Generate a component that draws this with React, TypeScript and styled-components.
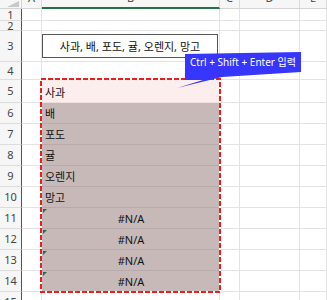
import React from "react";
import styled, { createGlobalStyle } from "styled-components";

const GlobalStyle = createGlobalStyle`
  html, body {
    margin: 0;
    padding: 0;
    background: #ffffff;
    overflow: hidden;
  }
  * {
    box-sizing: border-box;
  }
`;

const Page = styled.div`
  position: relative;
  width: 327px;
  height: 300px;
  overflow: hidden;
  font-family: "Noto Sans", "Noto Sans CJK KR", sans-serif;
`;

const Sheet = styled.div`
  display: grid;
  grid-template-columns: 22px 20px 178px 20px 60px 27px;
  grid-template-rows: 9px 12px 10px 31px 18px 23px repeat(9, 21px) 21px;
`;

type Place = { $r: number; $c: number };

const placed = (p: Place) => `grid-row: ${p.$r}; grid-column: ${p.$c};`;

const Corner = styled.div`
  grid-row: 1;
  grid-column: 1;
  background: #f6f6f6;
  border-right: 1px solid #d4d4d4;
  border-bottom: 1px solid #d4d4d4;
  position: relative;
  overflow: hidden;
  &::after {
    content: "";
    position: absolute;
    right: 2px;
    bottom: 1px;
    border-left: 12px solid transparent;
    border-bottom: 6px solid #c8c8c8;
  }
`;

const ColHeader = styled.div<{ $c: number; $active?: boolean }>`
  grid-row: 1;
  grid-column: ${(p) => p.$c};
  background: #f6f6f6;
  border-right: 1px solid #dadada;
  border-bottom: ${(p) => (p.$active ? "2px solid #217346" : "1px solid #d4d4d4")};
  color: #444;
  font-size: 11px;
  line-height: 12px;
  text-align: center;
  overflow: hidden;
  span {
    display: block;
    margin-top: -8px;
  }
`;

const RowHeader = styled.div<{ $r: number }>`
  grid-row: ${(p) => p.$r};
  grid-column: 1;
  background: #f6f6f6;
  border-right: 1px solid #217346;
  border-bottom: 1px solid #dcdcdc;
  color: #444;
  font-size: 11px;
  line-height: 12px;
  display: flex;
  align-items: center;
  justify-content: center;
  overflow: hidden;
`;

const Cell = styled.div<Place & { $fill?: string; $align?: string; $line?: string }>`
  ${placed}
  position: relative;
  background: ${(p) => p.$fill || "#ffffff"};
  border-right: 1px solid ${(p) => p.$line || "#e3e3e3"};
  border-bottom: 1px solid ${(p) => p.$line || "#e3e3e3"};
  color: #111;
  font-size: 11px;
  line-height: 15px;
  display: flex;
  align-items: flex-end;
  justify-content: ${(p) => p.$align || "flex-start"};
  padding: 0 2px 2px 3px;
  white-space: nowrap;
  overflow: hidden;
`;

const BoxCell = styled.div<Place>`
  ${placed}
  border-right: 1px solid #e3e3e3;
  border-bottom: 1px solid #e3e3e3;
  padding: 3px 1px 3px 0;
  display: flex;
`;

const Box = styled.div`
  flex: 1;
  border: 1px solid #555;
  display: flex;
  align-items: center;
  justify-content: center;
  font-size: 11px;
  color: #111;
  white-space: nowrap;
`;

const ErrorFlag = styled.span`
  position: absolute;
  left: 1px;
  top: 1px;
  width: 0;
  height: 0;
  border-top: 4px solid #1e7145;
  border-right: 4px solid transparent;
`;

const Selection = styled.div`
  grid-column: 3;
  grid-row: 6 / 16;
  margin: -2px -1px -1px -2px;
  position: relative;
  z-index: 2;
  pointer-events: none;
  svg {
    display: block;
  }
`;

const Callout = styled.div`
  position: absolute;
  z-index: 3;
  left: 176px;
  top: 51px;
  width: 126px;
  height: 38px;
  svg {
    position: absolute;
    inset: 0;
  }
`;

const CalloutText = styled.span`
  position: relative;
  display: block;
  margin-left: 9px;
  width: 116px;
  height: 22px;
  line-height: 22px;
  text-align: center;
  color: #ffffff;
  font-size: 10px;
  white-space: nowrap;
`;

const fruits = ["사과", "배", "포도", "귤", "오렌지", "망고"];
const columns = ["A", "B", "C", "D", "E"];
const SEL = "#c8b9b9";
const SEL_LINE = "#b9abab";

const App: React.FC = () => {
  const cells: React.ReactNode[] = [];

  for (let n = 1; n <= 15; n++) {
    const r = n + 1;
    cells.push(<RowHeader key={`h${n}`} $r={r}>{n}</RowHeader>);
    cells.push(<Cell key={`a${n}`} $r={r} $c={2} />);

    if (n === 3) {
      cells.push(
        <BoxCell key={`b${n}`} $r={r} $c={3}>
          <Box>사과, 배, 포도, 귤, 오렌지, 망고</Box>
        </BoxCell>
      );
    } else if (n >= 5 && n <= 14) {
      const idx = n - 5;
      const first = n === 5;
      const isFruit = idx < fruits.length;
      cells.push(
        <Cell
          key={`b${n}`}
          $r={r}
          $c={3}
          $fill={first ? "#fdeeee" : SEL}
          $line={first ? "#f3dede" : SEL_LINE}
          $align={isFruit ? "flex-start" : "center"}
        >
          {!isFruit && <ErrorFlag />}
          {isFruit ? fruits[idx] : "#N/A"}
        </Cell>
      );
    } else {
      cells.push(<Cell key={`b${n}`} $r={r} $c={3} />);
    }

    cells.push(<Cell key={`c${n}`} $r={r} $c={4} />);
    cells.push(<Cell key={`d${n}`} $r={r} $c={5} />);
    cells.push(<Cell key={`e${n}`} $r={r} $c={6} />);
  }

  return (
    <Page>
      <GlobalStyle />
      <Sheet>
        <Corner />
        {columns.map((c, i) => (
          <ColHeader key={c} $c={i + 2} $active={c === "B"}>
            <span>{c}</span>
          </ColHeader>
        ))}
        {cells}
        <Selection>
          <svg width="181" height="215" viewBox="0 0 181 215">
            <rect x="1" y="1" width="179" height="213" fill="none" stroke="#ffffff" strokeWidth="2" />
            <rect x="1" y="1" width="179" height="213" fill="none" stroke="#ee1c1c" strokeWidth="2" strokeDasharray="5 2" />
          </svg>
        </Selection>
      </Sheet>
      <Callout>
        <svg width="126" height="38" viewBox="0 0 126 38">
          <polygon points="9,3 125,1 125,21 46,26 1,37 27,29 9,29" fill="#3636ff" />
        </svg>
        <CalloutText>Ctrl + Shift + Enter 입력</CalloutText>
      </Callout>
    </Page>
  );
};

export default App;
